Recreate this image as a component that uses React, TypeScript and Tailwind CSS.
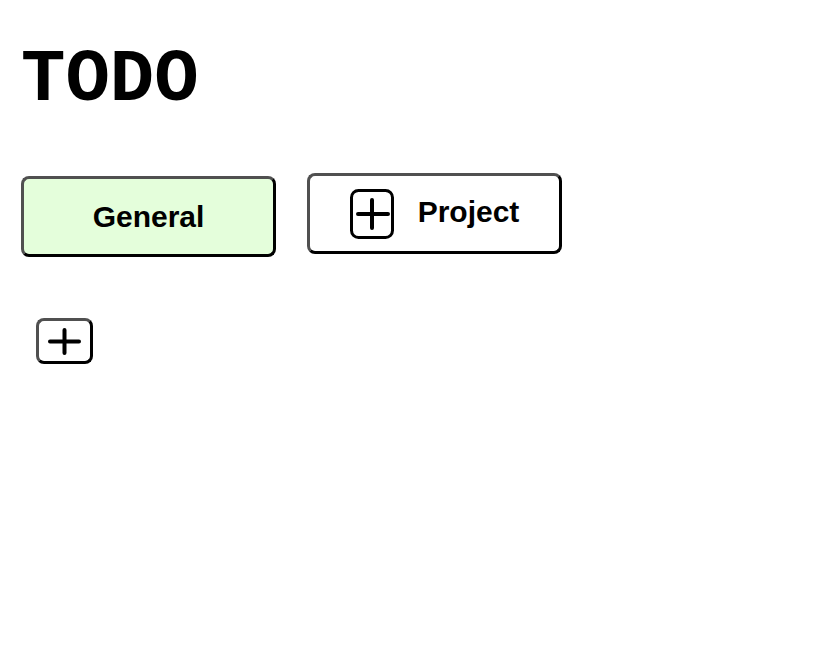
import { useState } from "react";

const PlusBox = () => (
  <svg width="44" height="50" viewBox="0 0 44 50" fill="none" stroke="black">
    <rect x="1.5" y="1.5" width="41" height="47" rx="7" strokeWidth="3" />
    <path d="M8 25h30M22 11v28" strokeWidth="4" strokeLinecap="round" />
  </svg>
);

const Plus = () => (
  <svg width="33" height="27" viewBox="0 0 33 27" fill="none" stroke="black">
    <path d="M2 13.5h29M16.5 2v23" strokeWidth="4" strokeLinecap="round" />
  </svg>
);

const btn =
  "border-[3px] border-t-[#505050] border-l-[#505050] border-r-black border-b-black rounded-lg";

export default function App() {
  const [projects] = useState(["General"]);
  const [active] = useState("General");

  return (
    <div className="min-h-screen bg-white px-[21px] pt-[43px] font-['Liberation_Sans',Arial,sans-serif] text-black">
      <h1 className="font-['Courier_New','Liberation_Mono',monospace] text-[74px] font-bold leading-none">
        TODO
      </h1>

      <div className="mt-[56px] flex items-start gap-[31px]">
        {projects.map((p) => (
          <button
            key={p}
            className={`${btn} mt-[3px] flex h-[81px] w-[255px] items-center justify-center text-[30px] font-bold ${
              p === active ? "bg-[#e4fedb]" : "bg-white"
            }`}
          >
            {p}
          </button>
        ))}
        <button
          className={`${btn} flex h-[81px] w-[255px] items-center justify-center gap-[24px] bg-white text-[30px] font-bold`}
        >
          <PlusBox />
          <span className="-mt-[4px]">Project</span>
        </button>
      </div>

      <div className="mt-[61px] pl-[15px]">
        <button className={`${btn} flex h-[46px] w-[57px] items-center justify-center bg-white`}>
          <Plus />
        </button>
      </div>
    </div>
  );
}
